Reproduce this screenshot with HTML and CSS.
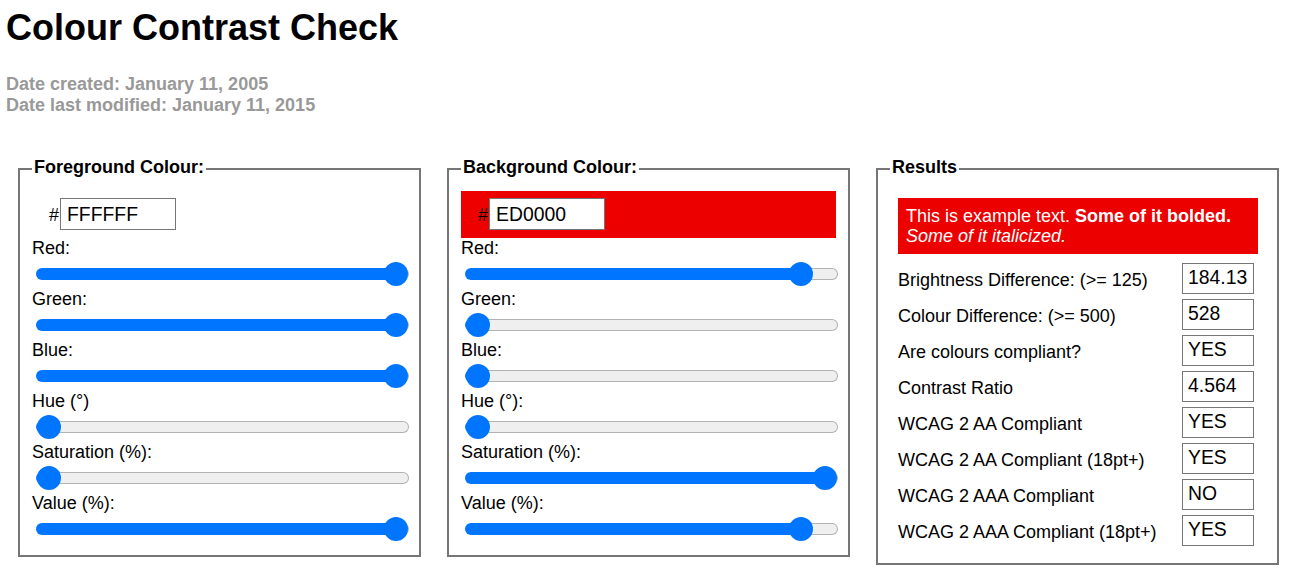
FILE: index.html
```html
<!DOCTYPE html>
<html lang="en">
<head>
<meta charset="utf-8">
<title>Colour Contrast Check</title>
<link rel="stylesheet" href="styles.css">
</head>
<body>
<div class="page">
  <h1 class="title">Colour Contrast Check</h1>
  <p class="dates">Date created: January 11, 2005<br>Date last modified: January 11, 2015</p>

  <form class="panels">
    <fieldset class="panel">
      <legend class="legend">Foreground Colour:</legend>
      <div class="swatch"><label class="hash" for="fg-hex">#</label><input id="fg-hex" class="hex" type="text" value="FFFFFF"></div>
      <label class="slabel">Red:</label>
      <input class="slider" type="range" min="0" max="255" value="255" style="--v:1">
      <label class="slabel">Green:</label>
      <input class="slider" type="range" min="0" max="255" value="255" style="--v:1">
      <label class="slabel">Blue:</label>
      <input class="slider" type="range" min="0" max="255" value="255" style="--v:1">
      <label class="slabel">Hue (°)</label>
      <input class="slider" type="range" min="0" max="360" value="0" style="--v:0">
      <label class="slabel">Saturation (%):</label>
      <input class="slider" type="range" min="0" max="100" value="0" style="--v:0">
      <label class="slabel">Value (%):</label>
      <input class="slider" type="range" min="0" max="100" value="100" style="--v:1">
    </fieldset>

    <fieldset class="panel">
      <legend class="legend">Background Colour:</legend>
      <div class="swatch swatch-bg"><label class="hash" for="bg-hex">#</label><input id="bg-hex" class="hex" type="text" value="ED0000"></div>
      <label class="slabel">Red:</label>
      <input class="slider" type="range" min="0" max="255" value="237" style="--v:0.929">
      <label class="slabel">Green:</label>
      <input class="slider" type="range" min="0" max="255" value="0" style="--v:0">
      <label class="slabel">Blue:</label>
      <input class="slider" type="range" min="0" max="255" value="0" style="--v:0">
      <label class="slabel">Hue (°):</label>
      <input class="slider" type="range" min="0" max="360" value="0" style="--v:0">
      <label class="slabel">Saturation (%):</label>
      <input class="slider" type="range" min="0" max="100" value="100" style="--v:1">
      <label class="slabel">Value (%):</label>
      <input class="slider" type="range" min="0" max="100" value="93" style="--v:0.929">
    </fieldset>

    <fieldset class="panel results">
      <legend class="legend">Results</legend>
      <div class="sample">This is example text. <b>Some of it bolded.</b> <i>Some of it italicized.</i></div>
      <div class="rows">
        <div class="row"><span class="rlabel">Brightness Difference: (&gt;= 125)</span><input class="out" type="text" value="184.13" readonly></div>
        <div class="row"><span class="rlabel">Colour Difference: (&gt;= 500)</span><input class="out" type="text" value="528" readonly></div>
        <div class="row"><span class="rlabel">Are colours compliant?</span><input class="out" type="text" value="YES" readonly></div>
        <div class="row"><span class="rlabel">Contrast Ratio</span><input class="out" type="text" value="4.564" readonly></div>
        <div class="row"><span class="rlabel">WCAG 2 AA Compliant</span><input class="out" type="text" value="YES" readonly></div>
        <div class="row"><span class="rlabel">WCAG 2 AA Compliant (18pt+)</span><input class="out" type="text" value="YES" readonly></div>
        <div class="row"><span class="rlabel">WCAG 2 AAA Compliant</span><input class="out" type="text" value="NO" readonly></div>
        <div class="row"><span class="rlabel">WCAG 2 AAA Compliant (18pt+)</span><input class="out" type="text" value="YES" readonly></div>
      </div>
    </fieldset>
  </form>
</div>
</body>
</html>
```

FILE: styles.css
```css
html, body {
  margin: 0;
  padding: 0;
  background: #ffffff;
}

body {
  font-family: "Liberation Sans", Arial, sans-serif;
  font-size: 18px;
  color: #000000;
}

.page {
  padding: 8px 6px 0 6px;
}

.title {
  margin: 0;
  font-size: 36px;
  line-height: 40px;
  font-weight: bold;
}

.dates {
  margin: 26px 0 0 0;
  font-weight: bold;
  line-height: 20.5px;
  color: #999999;
}

.panels {
  display: flex;
  align-items: flex-start;
  margin: 44px 0 0 -1px;
}

.panel {
  width: 375px;
  margin: 0 13px;
  padding: 12px 12px 11px 12px;
  border: 2px solid #767676;
  min-width: 0;
}

.legend {
  padding: 0 2px 4px 2px;
  font-weight: bold;
  line-height: 16px;
}

.swatch {
  display: flex;
  align-items: baseline;
  padding: 7px 16px 8px 17px;
}

.swatch-bg {
  background: #ed0000;
}

.hash {
  font-size: 18px;
}

.hex {
  flex: none;
  width: 116px;
  height: 32px;
  box-sizing: border-box;
  margin: 0 0 0 1px;
  padding: 4px 4px 4px 6px;
  border: 1px solid #767676;
  border-radius: 0;
  font-family: "Liberation Sans", Arial, sans-serif;
  font-size: 19.36px;
  color: #000000;
  background: #ffffff;
}

.slabel {
  display: block;
  line-height: 20px;
}

.slider {
  -webkit-appearance: none;
  appearance: none;
  display: block;
  width: 373px;
  height: 24px;
  margin: 3.5px 0 3.5px 4px;
  padding: 0;
  background: transparent;
  --fill: calc(13px + (100% - 26px) * var(--v));
}

.slider::-webkit-slider-runnable-track {
  height: 12px;
  box-sizing: border-box;
  border: 1px solid transparent;
  border-radius: 6px;
  background:
    linear-gradient(to right, #0075ff var(--fill), transparent var(--fill)) border-box,
    linear-gradient(#efefef, #efefef) padding-box,
    linear-gradient(#b2b2b2, #b2b2b2) border-box;
  background-origin: border-box;
}

.slider::-webkit-slider-thumb {
  -webkit-appearance: none;
  appearance: none;
  width: 24px;
  height: 24px;
  margin-top: -7px;
  border: 0;
  border-radius: 50%;
  background: #0075ff;
}

.sample {
  margin: 7px 7px 0 8px;
  padding: 8px;
  line-height: 20px;
  background: #ed0000;
  color: #ffffff;
}

.rows {
  display: flex;
  flex-direction: column;
  gap: 5px;
  margin: 9px 11px 6px 8px;
}

.row {
  display: flex;
  align-items: center;
  justify-content: space-between;
}

.rlabel {
  line-height: 20px;
  padding-top: 2px;
}

.out {
  flex: none;
  width: 72px;
  height: 31px;
  box-sizing: border-box;
  margin: 0;
  padding: 2px 4px 4px 5px;
  border: 1px solid #767676;
  border-radius: 0;
  font-family: "Liberation Sans", Arial, sans-serif;
  font-size: 19.36px;
  color: #000000;
  background: #ffffff;
}
```
